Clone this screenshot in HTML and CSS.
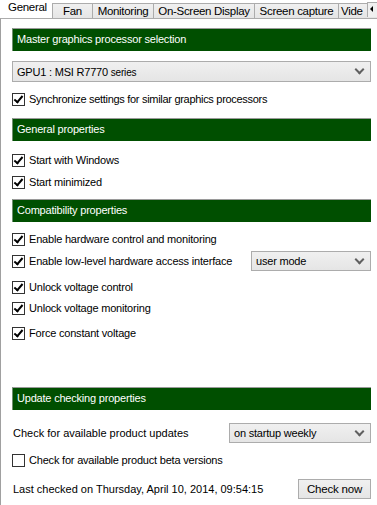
FILE: index.html
```html
<!DOCTYPE html>
<html lang="en">
<head>
    <meta charset="UTF-8">
    <title>General settings</title>
    <link rel="stylesheet" href="styles.css">
</head>
<body>
    <div class="tabs">
        <div class="tab active">General</div>
        <div class="tab">Fan</div>
        <div class="tab">Monitoring</div>
        <div class="tab">On-Screen Display</div>
        <div class="tab">Screen capture</div>
        <div class="tab cut">Vide</div>
        <div class="tab-scroll"><span class="arrow"></span></div>
    </div>
    <div class="panel">
        <div class="header h1">Master graphics processor selection</div>
        <div class="select wide">
            <span>GPU1 : MSI R7770 <small>series</small></span>
            <span class="chevron"></span>
        </div>
        <label class="row sync"><span class="box checked"></span>Synchronize settings for similar graphics processors</label>

        <div class="header h2">General properties</div>
        <label class="row r-start"><span class="box checked"></span>Start with Windows</label>
        <label class="row r-min"><span class="box checked"></span>Start minimized</label>

        <div class="header h3">Compatibility properties</div>
        <label class="row r-hw"><span class="box checked"></span>Enable hardware control and monitoring</label>
        <div class="row r-low">
            <label class="grow"><span class="box checked"></span>Enable low-level hardware access interface</label>
            <div class="select mode">
                <span>user mode</span>
                <span class="chevron"></span>
            </div>
        </div>
        <label class="row r-uvc"><span class="box checked"></span>Unlock voltage control</label>
        <label class="row r-uvm"><span class="box checked"></span>Unlock voltage monitoring</label>
        <label class="row r-fcv"><span class="box checked"></span>Force constant voltage</label>

        <div class="header h4">Update checking properties</div>
        <div class="row r-upd">
            <span class="grow plain">Check for available product updates</span>
            <div class="select freq">
                <span>on startup weekly</span>
                <span class="chevron"></span>
            </div>
        </div>
        <label class="row r-beta"><span class="box"></span>Check for available product beta versions</label>
        <div class="row r-last">
            <span class="grow plain">Last checked on Thursday, April 10, 2014, 09:54:15</span>
            <button class="btn">Check now</button>
        </div>
    </div>
</body>
</html>
```

FILE: styles.css
```css
body {
    margin: 0;
    padding: 0;
    background: #fff;
    font-family: 'Liberation Sans', Arial, sans-serif;
    font-size: 11px;
    letter-spacing: -0.2px;
    color: #000;
    width: 377px;
    height: 505px;
    overflow: hidden;
}
.tabs {
    display: flex;
    align-items: flex-end;
    height: 18px;
    overflow: hidden;
    position: relative;
}
.tab {
    flex: none;
    height: 15px;
    line-height: 14px;
    border: 1px solid #acacac;
    border-bottom: none;
    border-left: none;
    background: linear-gradient(#f0f0f0, #e5e5e5);
    font-size: 11.5px;
    letter-spacing: -0.3px;
    box-sizing: border-box;
    white-space: nowrap;
    overflow: hidden;
    text-align: center;
}
.tab.active {
    height: 18px;
    line-height: 14px;
    background: #fff;
    border: none;
    width: 52px;
    text-align: left;
    padding-left: 8px;
}
.tab:nth-child(2) { width: 41px; border-left: 1px solid #acacac; }
.tab:nth-child(3) { width: 61px; }
.tab:nth-child(4) { width: 101px; }
.tab:nth-child(5) { width: 84px; }
.tab.cut { width: 40px; text-align: left; padding-left: 2px; }
.tab-scroll {
    position: absolute;
    right: 0;
    top: 2px;
    width: 10px;
    height: 15px;
    background: #f0f0f0;
    border-left: 1px solid #acacac;
    border-top: 1px solid #acacac;
    box-sizing: border-box;
}
.tab-scroll .arrow {
    position: absolute;
    left: 2px;
    top: 3px;
    border-right: 3px solid #000;
    border-top: 3px solid transparent;
    border-bottom: 3px solid transparent;
}
.panel {
    border-top: 1px solid #acacac;
    border-left: 1px solid #a0a0a0;
    margin-left: 0;
    padding: 0 6px 0 11px;
    height: 487px;
    display: flex;
    flex-direction: column;
}
.header {
    flex: none;
    height: 23px;
    box-sizing: border-box;
    background: #004f00;
    border-top: 1px solid #9a9a9a;
    border-left: 1px solid #6f8f6f;
    color: #fff;
    line-height: 21px;
    padding-left: 4px;
    font-size: 11px;
}
.h1 { margin-top: 9px; }
.h2 { margin-top: 9px; }
.h3 { margin-top: 7px; }
.h4 { margin-top: 44px; }
.row {
    display: flex;
    align-items: center;
    height: 20px;
    flex: none;
}
.grow { flex: 1; display: flex; align-items: center; }
.plain { padding-left: 1px; letter-spacing: 0; }
.sync { margin-top: 7px; letter-spacing: -0.3px; }
.r-start { margin-top: 9px; }
.r-min { margin-top: 2px; }
.r-hw { margin-top: 7px; }
.r-low { margin-top: 2px; }
.r-uvc { margin-top: 6px; }
.r-uvm { margin-top: 1px; }
.r-fcv { margin-top: 5px; }
.r-upd { margin-top: 13px; }
.r-beta { margin-top: 7px; }
.r-last { margin-top: 9px; }
.box {
    flex: none;
    width: 13px;
    height: 13px;
    box-sizing: border-box;
    border: 1px solid #333;
    background: #fff;
    margin-right: 4px;
    position: relative;
}
.box.checked::after {
    content: "";
    position: absolute;
    left: 3px;
    top: 0px;
    width: 3px;
    height: 7px;
    border-right: 2px solid #000;
    border-bottom: 2px solid #000;
    transform: rotate(40deg);
}
.select {
    display: flex;
    align-items: center;
    justify-content: space-between;
    box-sizing: border-box;
    height: 21px;
    border: 1px solid #acacac;
    background: linear-gradient(#f0f0f0, #e5e5e5);
    padding: 0 7px 0 4px;
    flex: none;
}
.select small { font-size: 10px; }
.wide { margin-top: 10px; }
.mode { width: 120px; height: 20px; }
.freq { width: 142px; height: 20px; }
.chevron {
    width: 5px;
    height: 5px;
    border-right: 2px solid #606060;
    border-bottom: 2px solid #606060;
    transform: rotate(45deg);
    margin-top: -4px;
}
.btn {
    width: 73px;
    height: 20px;
    border: 1px solid #acacac;
    background: linear-gradient(#f0f0f0, #e5e5e5);
    font-family: inherit;
    font-size: 11.5px;
    letter-spacing: -0.2px;
    padding: 0;
    color: #000;
}
```
